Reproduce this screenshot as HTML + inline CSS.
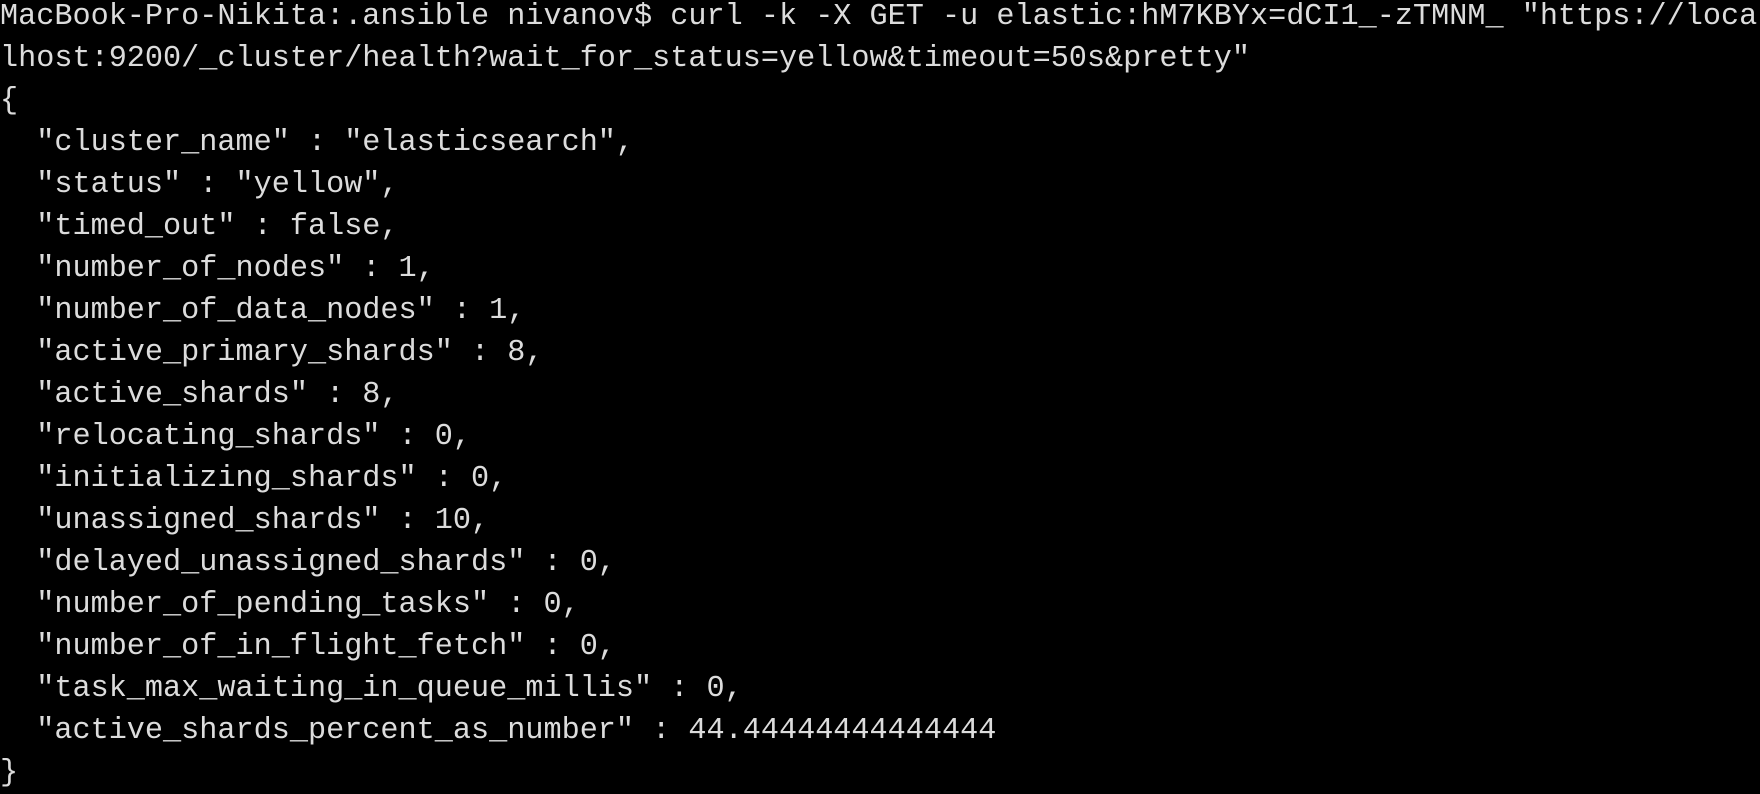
<!DOCTYPE html>
<html><head><meta charset="utf-8"><style>
html,body{margin:0;padding:0;background:#000;width:1760px;height:784px;overflow:hidden}
pre{margin:0;position:absolute;left:0;top:-4px;font-family:"Liberation Mono","DejaVu Sans Mono",monospace;font-size:30.2px;line-height:42px;color:#dcdcdc;white-space:pre}
</style></head><body><pre>MacBook-Pro-Nikita:.ansible nivanov$ curl -k -X GET -u elastic:hM7KBYx=dCI1_-zTMNM_ "https://loca
lhost:9200/_cluster/health?wait_for_status=yellow&amp;timeout=50s&amp;pretty"
{
  "cluster_name" : "elasticsearch",
  "status" : "yellow",
  "timed_out" : false,
  "number_of_nodes" : 1,
  "number_of_data_nodes" : 1,
  "active_primary_shards" : 8,
  "active_shards" : 8,
  "relocating_shards" : 0,
  "initializing_shards" : 0,
  "unassigned_shards" : 10,
  "delayed_unassigned_shards" : 0,
  "number_of_pending_tasks" : 0,
  "number_of_in_flight_fetch" : 0,
  "task_max_waiting_in_queue_millis" : 0,
  "active_shards_percent_as_number" : 44.44444444444444
}</pre></body></html>
